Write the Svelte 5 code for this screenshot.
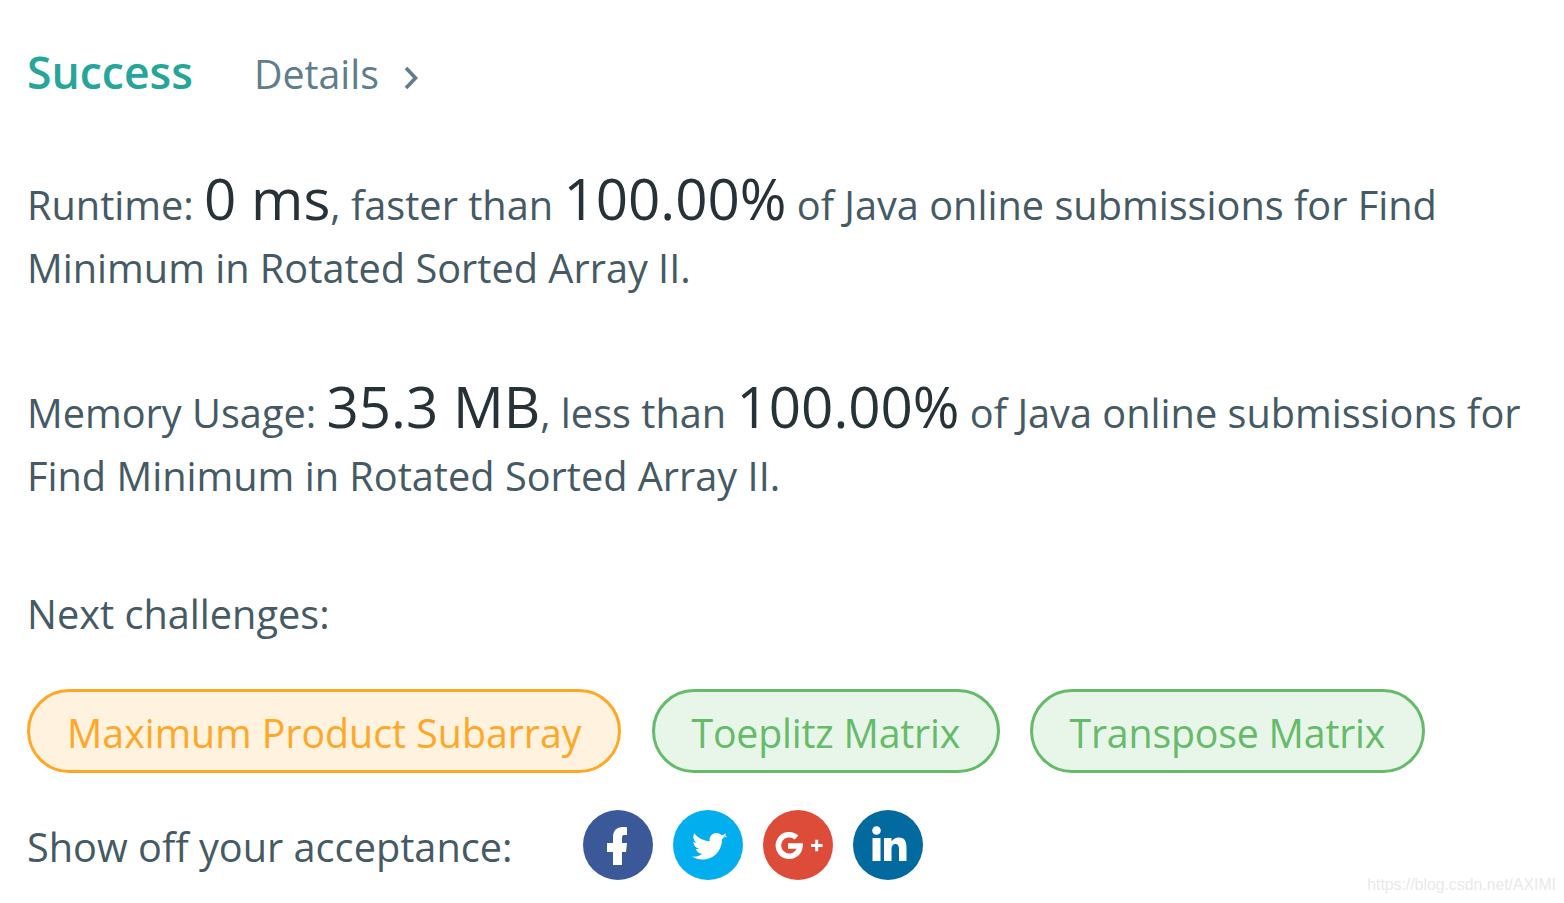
<script>
  const challenges = [
    { name: 'Maximum Product Subarray', level: 'medium' },
    { name: 'Toeplitz Matrix', level: 'easy' },
    { name: 'Transpose Matrix', level: 'easy' },
  ]
</script>

<div class="result">
  <div class="head">
    <span class="status">Success</span>
    <a class="details">Details
      <svg class="chev" width="16" height="24" viewBox="0 0 16 24"><path d="M3 2l9.500 10L3 22" fill="none" stroke="currentColor" stroke-width="3.6" /></svg>
    </a>
  </div>

  <p class="line first">Runtime: <b>0 ms</b>, faster than <b>100.00%</b> of Java online submissions for Find Minimum in Rotated Sorted Array II.</p>
  <p class="line second">Memory Usage: <b>35.3 MB</b>, less than <b>100.00%</b> of Java online submissions for Find Minimum in Rotated Sorted Array II.</p>

  <div class="next">Next challenges:</div>
  <div class="pills">
    {#each challenges as c}
      <a class="pill {c.level}">{c.name}</a>
    {/each}
  </div>

  <div class="share">
    <span class="label">Show off your acceptance:</span>
    <div class="icons">
      <span class="icon fb">
        <svg viewBox="0 0 70 70" width="70" height="70"><path fill="#fff" d="M30 55V42h-6v-9h6v-6c0-6.500 4-10 9.500-10 2 0 3.500.1 4.500.3V25h-3c-1.500 0-2 1-2 3v5h5l-1 9h-4v13z"/></svg>
      </span>
      <span class="icon tw">
        <svg viewBox="0 0 70 70" width="70" height="70"><path fill="#fff" d="M54 26.500c-1.300.6-2.700 1-4 1.100 1.400-1 2.500-2.300 3-4-1.400.8-2.800 1.400-4.400 1.700a7.200 7.200 0 0 0-5.200-2.300c-4.400 0-7.600 4-6.700 8.300-6.200-.3-11.700-3.200-15.400-8-1.800 3.200-.9 7.300 2.200 9.400-1.100 0-2.200-.4-3.100-.9 0 3.300 2.300 6.200 5.600 7-1 .2-2.100.3-3.100.1.900 2.800 3.400 4.800 6.400 4.900-3 2.300-6.600 3.300-10.200 2.800 3 2 6.600 3 10.400 3 12.700 0 19.800-10.700 19.400-20.300 1.400-.9 2.600-2.200 3.600-3.800z"/></svg>
      </span>
      <span class="icon gp">
        <svg viewBox="0 0 70 70" width="70" height="70"><path fill="none" stroke="#fff" stroke-width="5.500" d="M33.500 27.500a10.800 10.800 0 1 0 3.500 8.500H25"/><path fill="#fff" d="M48 34h4.200v-4.200h3V34H59.500v3h-4.300v4.200h-3V37H48z"/></svg>
      </span>
      <span class="icon li">
        <svg viewBox="0 0 70 70" width="70" height="70"><circle cx="23.500" cy="20.500" r="4.300" fill="#fff"/><path fill="#fff" d="M19.500 28h8v23h-8zM31 28h7.500v3.500c1.300-2.300 4-4 7.300-4 6 0 7.700 4 7.700 10V51H46V39c0-3-.8-5-3.500-5-2.800 0-4 2-4 5v12H31z"/></svg>
      </span>
    </div>
  </div>

  <span class="watermark">https://blog.csdn.net/AXIMI</span>
</div>

<style>
  :global(body) {
    margin: 0;
    background: #fff;
  }

  .result {
    position: relative;
    height: 903px;
    box-sizing: border-box;
    padding: 42px 27px 0 27px;
    font-family: "Open Sans", "Noto Sans", sans-serif;
    font-size: 39.7px;
    color: #455a64;
    overflow: hidden;
  }

  .head {
    display: flex;
    align-items: baseline;
    gap: 61px;
    height: 60px;
    line-height: 60px;
  }

  .status {
    font-size: 44.5px;
    font-weight: 600;
    color: #26a69a;
  }

  .details {
    font-size: 39.3px;
    color: #607d8b;
    display: flex;
    align-items: center;
    gap: 24px;
  }

  .chev {
    position: relative;
    top: 4px;
  }

  .line {
    margin: 0;
    line-height: 63px;
    width: 1510px;
  }

  .first {
    margin-top: 65px;
  }

  .second {
    margin-top: 75px;
  }

  .line b {
    font-size: 56.500px;
    font-weight: 400;
    color: #263238;
  }

  .next {
    margin-top: 75px;
    line-height: 63px;
  }

  .pills {
    display: flex;
    gap: 30.500px;
    margin-top: 43px;
    font-size: 39.3px;
  }

  .pill {
    height: 84px;
    box-sizing: border-box;
    padding: 0 37px;
    border: 3px solid;
    border-radius: 42px;
    line-height: 82px;
  }

  .medium {
    color: #ffa726;
    border-color: #ffa726;
    background: #fff3e0;
  }

  .easy {
    padding: 0 36.500px;
    letter-spacing: -0.2px;
    color: #66bb6a;
    border-color: #66bb6a;
    background: #e8f5e9;
  }

  .share {
    display: flex;
    align-items: center;
    gap: 70px;
    margin-top: 37px;
  }

  .label {
    padding-top: 4px;
  }

  .icons {
    display: flex;
    gap: 20px;
    margin-left: 1px;
  }

  .icon {
    width: 70px;
    height: 70px;
    border-radius: 50%;
    display: block;
  }

  .icon svg {
    display: block;
  }

  .fb { background: #3b5998; }
  .tw { background: #03aeef; }
  .gp { background: #dd4b39; }
  .li { background: #026a9e; }

  .watermark {
    position: absolute;
    right: 8px;
    bottom: 9px;
    font-family: "Liberation Sans", sans-serif;
    font-size: 15.8px;
    color: #e9e9e9;
  }
</style>
